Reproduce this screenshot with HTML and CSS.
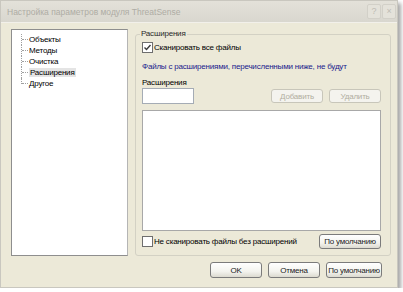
FILE: index.html
```html
<!DOCTYPE html>
<html lang="ru">
<head>
    <meta charset="UTF-8">
    <title>Настройка параметров модуля ThreatSense</title>
    <link rel="stylesheet" href="styles.css">
</head>
<body>
    <div class="window">
        <div class="titlebar">
            <span class="title">Настройка параметров модуля ThreatSense</span>
            <div class="title-buttons">
                <span class="tbtn">?</span>
                <span class="tbtn">&times;</span>
            </div>
        </div>
        <div class="content">
            <div class="main">
                <ul class="tree">
                    <li>Объекты</li>
                    <li>Методы</li>
                    <li>Очистка</li>
                    <li class="selected"><span>Расширения</span></li>
                    <li class="last">Другое</li>
                </ul>
                <fieldset class="group">
                    <legend>Расширения</legend>
                    <label class="check">
                        <span class="box">
                            <svg width="9" height="9" viewBox="0 0 9 9"><path d="M1.5 4.5 L3.5 6.5 L7.5 2" fill="none" stroke="#3a3a3a" stroke-width="1.4"/></svg>
                        </span>
                        Сканировать все файлы
                    </label>
                    <p class="note">Файлы с расширениями, перечисленными ниже, не будут</p>
                    <div class="field-label">Расширения</div>
                    <div class="ext-row">
                        <div class="input"></div>
                        <button class="btn" disabled>Добавить</button>
                        <button class="btn" disabled>Удалить</button>
                    </div>
                    <div class="list"></div>
                    <div class="bottom-row">
                        <label class="check"><span class="box"></span>Не сканировать файлы без расширений</label>
                        <button class="btn btn-default">По умолчанию</button>
                    </div>
                </fieldset>
            </div>
            <div class="actions">
                <button class="btn btn-ok">OK</button>
                <button class="btn btn-ok">Отмена</button>
                <button class="btn btn-wide">По умолчанию</button>
            </div>
        </div>
    </div>
</body>
</html>
```

FILE: styles.css
```css
body {
    margin: 0;
    background: #ffffff;
    font-family: "Liberation Sans", Arial, sans-serif;
    font-size: 8px;
    letter-spacing: -0.2px;
    color: #000;
    white-space: nowrap;
}
.window {
    width: 396px;
    height: 286px;
    border: 1px solid #c9c7bf;
    background: #ece9d8;
    box-shadow: 3px 3px 4px rgba(0, 0, 0, 0.35);
    display: flex;
    flex-direction: column;
}
.titlebar {
    height: 21px;
    display: flex;
    align-items: center;
    justify-content: space-between;
    padding: 0 1px 0 6px;
    background: linear-gradient(#e3e1d9, #d9d7cf);
    border-bottom: 1px solid #f2f0ea;
}
.title {
    color: #aeaca4;
    font-size: 8.5px;
    letter-spacing: 0;
}
.title-buttons {
    display: flex;
    gap: 1px;
}
.tbtn {
    width: 12px;
    height: 13px;
    border: 1px solid #d2d0c8;
    border-radius: 2px;
    background: #e4e2da;
    color: #bebcb4;
    font-size: 9px;
    line-height: 13px;
    text-align: center;
}
.content {
    flex: 1;
    display: flex;
    flex-direction: column;
    padding: 6px 6px 9px 10px;
}
.main {
    height: 227px;
    display: flex;
    gap: 7px;
}
.tree {
    width: 115px;
    margin: 0;
    padding: 4px 0 0 0;
    list-style: none;
    background: #fff;
    border: 1px solid #8e8e8e;
    border-right-color: #b5b5b5;
}
.tree li {
    height: 11px;
    line-height: 11px;
    padding-left: 17px;
    position: relative;
}
.tree li::before {
    content: "";
    position: absolute;
    left: 9px;
    top: 0;
    height: 11px;
    border-left: 1px dotted #a0a0a0;
}
.tree li.last::before {
    height: 6px;
}
.tree li::after {
    content: "";
    position: absolute;
    left: 10px;
    top: 5px;
    width: 6px;
    border-top: 1px dotted #a0a0a0;
}
.tree li.selected span {
    background: #e4e4e4;
    padding: 0 1px;
}
.group {
    flex: 1;
    margin: 0;
    min-width: 0;
    padding: 0 9px 5px 6px;
    border: 1px solid #d3d1c4;
    border-radius: 3px;
    display: flex;
    flex-direction: column;
}
.group legend {
    padding: 0 1px;
    margin-left: -2px;
    color: #2a2a2a;
    line-height: 10px;
}
.check {
    display: flex;
    align-items: center;
    gap: 1px;
    height: 12px;
}
.group > .check {
    margin-top: 2px;
}
.box {
    width: 9px;
    height: 9px;
    border: 1px solid #6e6e6e;
    background: #fff;
    display: flex;
    align-items: center;
    justify-content: center;
}
.note {
    margin: 8px 0 0 0;
    line-height: 11px;
    color: #1a1a8c;
}
.field-label {
    margin-top: 5px;
    line-height: 11px;
}
.ext-row {
    display: flex;
    align-items: center;
    gap: 6px;
}
.input {
    width: 50px;
    height: 14px;
    background: #fff;
    border: 1px solid #a5acb5;
    margin-right: auto;
}
.btn {
    font-family: inherit;
    font-size: 8px;
    letter-spacing: -0.2px;
    height: 15px;
    padding: 0;
    border: 1px solid #7b7b7b;
    border-radius: 3px;
    background: linear-gradient(#ffffff, #f3f3ee 60%, #dcdad0);
    color: #1a1a1a;
    line-height: 13px;
    white-space: nowrap;
}
.btn:disabled {
    border-color: #c8c6ba;
    background: #f4f3ee;
    color: #b1ae9f;
}
.ext-row .btn {
    width: 52px;
    height: 14px;
}
.list {
    margin-top: 6px;
    height: 119px;
    background: #fff;
    border: 1px solid #a8a8a8;
}
.bottom-row {
    margin-top: 3px;
    display: flex;
    align-items: center;
    justify-content: space-between;
}
.btn-default {
    width: 62px;
    height: 15px;
}
.actions {
    margin-top: 6px;
    display: flex;
    justify-content: flex-end;
    gap: 6px;
    padding-right: 9px;
}
.btn-ok {
    width: 52px;
    height: 16px;
}
.btn-wide {
    width: 56px;
    height: 16px;
}
```
